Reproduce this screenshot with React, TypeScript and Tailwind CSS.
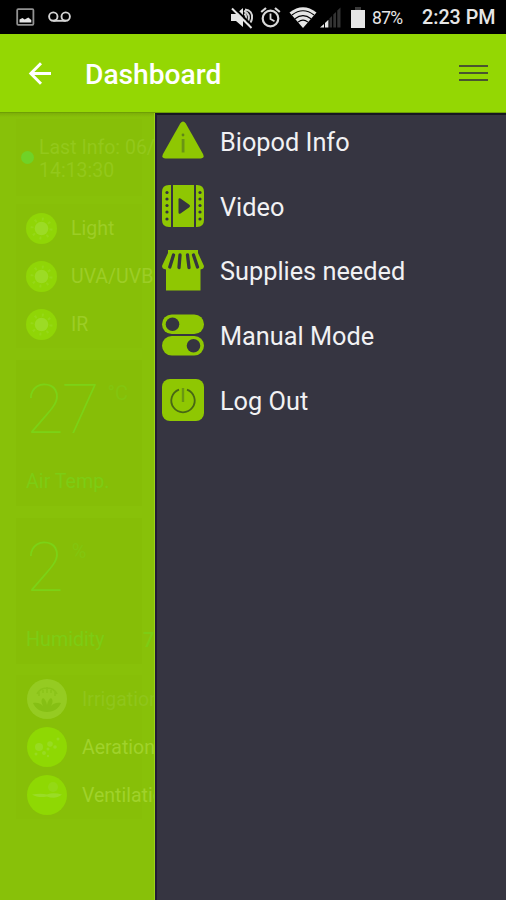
import type { ReactNode } from "react";

const font = "[font-family:Roboto,'Liberation_Sans',sans-serif]";

const StatusBar = () => (
  <div className="flex h-[34px] shrink-0 items-center bg-black text-[#e6e6e6]">
    {/* Notifications */}
    <svg className="ml-[16px] h-[18px] w-[19px]" viewBox="0 0 19 18" fill="none">
      <rect x="1.2" y="1.2" width="16.2" height="15.6" rx="1" stroke="#929292" strokeWidth="1.8" />
      <path d="M3.500 14.500v-3l3-1.500 2.200 1.500 3.600-2 3 2.500v2.500z" fill="#e6e6e6" />
    </svg>
    <svg className="ml-[13px] h-[12px] w-[23px]" viewBox="0 0 23 12" fill="none" stroke="#d5d5d5" strokeWidth="1.9">
      <circle cx="5.3" cy="5.6" r="4.2" />
      <circle cx="17.7" cy="5.6" r="4.2" />
      <path d="M5.3 9.8h12.4" />
    </svg>

    {/* System icons */}
    <svg className="ml-[159px] h-[23px] w-[24px]" viewBox="0 0 24 23" fill="none">
      <path d="M1 8h5l7-6v19l-7-6H1z" fill="#e6e6e6" />
      <path d="M14.5 7.5q3 3.5 0 8M15 3.5q8 1 7 9-.5 4-4 6.500M14 5q7 3 4 11" stroke="#d5d5d5" strokeWidth="2" />
      <path d="M3.600 1.200 23 20.500" stroke="#000" strokeWidth="2.2" />
      <path d="M2 2.500 21.500 22" stroke="#e6e6e6" strokeWidth="2" />
    </svg>
    <svg className="ml-[6px] h-[23px] w-[21px]" viewBox="0 0 21 23" fill="none" stroke="#d9d9d9">
      <circle cx="10.500" cy="12.500" r="7.800" strokeWidth="2.200" />
      <path d="M10.500 7.500V13l4 2.300" strokeWidth="1.800" />
      <path d="M1.200 6 6 2M15 2l4.800 4" strokeWidth="2.200" />
    </svg>
    <svg className="ml-[8px] h-[23px] w-[28px]" viewBox="0 0 28 23" fill="none">
      <path d="M.5 6.500Q14-4 27.500 6.500L14 22z" fill="#e6e6e6" />
      <path d="M3 9Q14 .5 25 9M6 12.700Q14 6.500 22 12.700M9 16.200Q14 12 19 16.200" stroke="#000" strokeWidth="1.100" />
    </svg>
    <svg className="ml-[3px] h-[21px] w-[21px]" viewBox="0 0 21 21">
      <path d="M0 20.500 4 17v3.500z M5 16l3.400-3.300v7.800H5z" fill="#e6e6e6" />
      <path d="M9.400 11.500 12 9v11.500H9.400z M13.300 7.500 16 5v15.500h-2.700z M17.300 3.500 20.500.5v20h-3.200z" fill="#333" />
    </svg>
    <svg className="ml-[10px] h-[21px] w-[14px]" viewBox="0 0 14 21">
      <path d="M4 0h6v3H4z" fill="#3a3a3a" />
      <path d="M0 3h14v18H0z" fill="#e6e6e6" />
    </svg>
    <span className="mt-[2px] ml-[7px] w-[50px] text-[17.5px] whitespace-nowrap tracking-[-0.7px]">87%</span>
    <span className="mt-[2px] text-[19.7px] font-medium whitespace-nowrap">2:23 PM</span>
  </div>
);

const Header = () => (
  <header className="flex h-[79px] shrink-0 items-center border-b border-[#6f9f05] bg-[#94d703]">
    <svg className="ml-[28px] h-[24px] w-[24px]" viewBox="0 0 24 24" fill="none" stroke="white" strokeWidth="2.900">
      <path d="M23 12.500H3M13 2.300 2.800 12.500 13 22.700" />
    </svg>
    <h1 className="mt-[4px] ml-[33px] text-[28.2px] leading-8 font-medium whitespace-nowrap text-white">Dashboard</h1>
    <div className="mr-[18px] ml-auto flex w-[29px] flex-col gap-[4.5px]">
      <span className="h-[2.5px] bg-[#4a5530]" />
      <span className="h-[2.5px] bg-[#4a5530]" />
      <span className="h-[2.5px] bg-[#4a5530]" />
    </div>
  </header>
);

const SunIcon = () => (
  <svg className="size-[31px] shrink-0" viewBox="0 0 31 31">
    <circle cx="15.500" cy="15.500" r="15.500" fill="#90d506" />
    <circle cx="15.500" cy="15.500" r="9.500" fill="none" stroke="#96d817" strokeWidth="3" strokeDasharray="2 5.460" />
    <circle cx="15.500" cy="15.500" r="6.800" fill="#9cdb25" />
  </svg>
);

const LightRow = ({ label }: { label: string }) => (
  <div className="flex h-[48px] items-center gap-[14px] pl-[10px]">
    <SunIcon />
    <span className="mt-[2px] text-[19.5px] whitespace-nowrap text-[#9ccd26]">{label}</span>
  </div>
);

type GaugeProps = {
  value: string;
  unit: string;
  label: string;
  extra?: string;
};

const Gauge = ({ value, unit, label, extra }: GaugeProps) => (
  <section className="mr-[12px] flex flex-col bg-[#86be07] pl-[10px]">
    <div className="flex h-[96px] items-center gap-[10px]">
      <span className="mt-[4px] text-[69px] leading-[80px] font-thin tracking-[-2px] text-[#7cd216]">{value}</span>
      <span className="mb-[30px] text-[20px] text-[#83c50f]">{unit}</span>
    </div>
    <div className="flex h-[50px] items-center pt-[2px] whitespace-nowrap text-[#7dcc14]">
      <span className="w-[117px] shrink-0 text-[19.7px]">{label}</span>
      <span className="text-[20px] font-medium">{extra}</span>
    </div>
  </section>
);

type DeviceRowProps = {
  label: string;
  dim?: boolean;
  children: ReactNode;
};

const DeviceRow = ({ label, dim, children }: DeviceRowProps) => (
  <div className="flex h-[48px] items-center gap-[15px] pl-[11px]">
    <svg className="size-[40px] shrink-0" viewBox="0 0 40 40">
      <circle cx="20" cy="20" r="20" fill={dim ? "#95cb22" : "#8fd803"} />
      {children}
    </svg>
    <span className={`mt-[2px] text-[19.5px] whitespace-nowrap ${dim ? "text-[#8fc51b]" : "text-[#a0d22b]"}`}>{label}</span>
  </div>
);

// Dashboard pushed behind the opened drawer
const Dashboard = () => (
  <main className="flex w-[155px] shrink-0 flex-col overflow-hidden border-r border-[#9bd31a] bg-[#88c109] pl-[16px]">
    <div className="-ml-[16px] h-[4px] w-[155px] shrink-0 bg-linear-to-b from-[#7dae08] to-[#88c109]" />
    <div className="mt-[2px] mr-[12px] flex h-[77px] items-center gap-[5px] bg-[#87bf08] pl-[5px]">
      <span className="mb-[1px] size-[13px] shrink-0 rounded-full bg-[#70d227]" />
      <p className="pt-[2px] text-[19.5px] leading-[23px] whitespace-nowrap text-[#93c81b]">
        Last Info: 06/
        <br />
        14:13:30
      </p>
    </div>
    <section className="mt-[8px] mr-[12px] flex flex-col bg-[#87bf08]">
      <LightRow label="Light" />
      <LightRow label="UVA/UVB" />
      <LightRow label="IR" />
    </section>
    <div className="mt-[12px] flex flex-col gap-[12px]">
      <Gauge value="27" unit="°C" label="Air Temp." />
      <Gauge value="2" unit="%" label="Humidity" extra="7" />
    </div>
    <section className="mt-[11px] mr-[12px] flex flex-col bg-[#87bf08]">
      <DeviceRow label="Irrigation" dim>
        <path
          d="M20 33c-7 0-12-4-14-9 5-1 8 1 10 3-2-4-2-6 0-8 2 1 3 3 4 7 1-4 2-6 4-7 2 2 2 4 0 8 2-2 5-4 10-3-2 5-7 9-14 9z"
          fill="#86bf14"
        />
        <path d="M10 15c2-4 6-6 10-6s8 2 10 6M12 12v5M16 9v5M20 8v6M24 9v5M28 12v5" fill="none" stroke="#8bc319" strokeWidth="1.500" />
      </DeviceRow>
      <DeviceRow label="Aeration">
        <g fill="#98db20">
          <circle cx="12" cy="20" r="4" />
          <circle cx="23" cy="17" r="2.800" />
          <circle cx="17" cy="26" r="2" />
          <circle cx="28" cy="20" r="1.800" />
          <circle cx="21" cy="22" r="1.500" />
          <circle cx="31" cy="12" r="1.500" />
          <circle cx="9" cy="27" r="1.500" />
          <circle cx="21" cy="29" r="1.200" />
        </g>
      </DeviceRow>
      <DeviceRow label="Ventilation">
        <circle cx="26" cy="12" r="5" fill="#94d915" />
        <path d="M5 19.500c6-1 11-1 15 0 5-2 10-1 15 0-5 4-10 4-15 2-5 1-10 1-15-2z" fill="#9adc26" />
      </DeviceRow>
    </section>
  </main>
);

const InfoIcon = () => (
  <svg className="size-[42px]" viewBox="0 0 42 42" fill="#8fc702">
    <path d="M18.200 3.500q2.800-4 5.600 0L41 34q2 4.500-2.500 4.500h-35Q-1 38.500 1 34z" />
    <circle cx="21" cy="15" r="1.400" fill="#5f8518" />
    <path d="M19.700 19h2.800v13.500h-2.800z" fill="#6a9414" />
  </svg>
);

const VideoIcon = () => (
  <svg className="size-[42px]" viewBox="0 0 42 42" fill="#8fc702">
    <path d="M7 0h2v42H7q-7 0-7-7V7q0-7 7-7zM11 0h21v42H11zM34 0h1q7 0 7 7v28q0 7-7 7h-1z" />
    <path d="M16.500 14.500q0-2 2-1l8.500 6q2 1.500 0 3l-8.500 6q-2 1-2-1z" fill="#353440" />
    <g fill="#353440">
      {[7.5, 14, 20.5, 27, 34].map((y) => (
        <g key={y}>
          <circle cx="5" cy={y} r="1.600" />
          <circle cx="38" cy={y} r="1.600" />
        </g>
      ))}
    </g>
  </svg>
);

const StoreIcon = () => (
  <svg className="size-[42px]" viewBox="0 0 42 42" fill="#8fc702">
    <path d="M6 1h30v3l6 13q0 3-3.500 3.500V41.500H4v-21Q0 20 0 17L6 4z" />
    <path
      d="M11.500 6 7.800 18M18 6l-1 12.500M25.500 6l1.500 12.500M31.500 6l4 12"
      fill="none"
      stroke="#353440"
      strokeWidth="3.300"
      strokeLinecap="round"
    />
  </svg>
);

const SwitchIcon = () => (
  <svg className="size-[42px]" viewBox="0 0 42 42">
    <rect y=".5" width="42" height="19.500" rx="9.750" fill="#8fc702" />
    <rect y="22" width="42" height="19.500" rx="9.750" fill="#8fc702" />
    <circle cx="10.500" cy="10.200" r="6.800" fill="#353440" />
    <circle cx="31.500" cy="31.800" r="6.800" fill="#353440" />
  </svg>
);

const PowerIcon = () => (
  <svg className="size-[42px]" viewBox="0 0 42 42" fill="none">
    <rect width="42" height="42" rx="8" fill="#8fc702" />
    <path d="M17 10.600a11.700 11.700 0 1 0 8 0" stroke="#486715" strokeWidth="1.800" />
    <path d="M21 9v14" stroke="#6a9712" strokeWidth="2.400" />
  </svg>
);

const menu = [
  { label: "Biopod Info", icon: <InfoIcon /> },
  { label: "Video", icon: <VideoIcon /> },
  { label: "Supplies needed", icon: <StoreIcon /> },
  { label: "Manual Mode", icon: <SwitchIcon /> },
  { label: "Log Out", icon: <PowerIcon /> },
];

const Drawer = () => (
  <nav className="flex grow flex-col border-t-2 border-l-2 border-t-[#171720] border-l-[#211b35] bg-[#363541] pl-[5px]">
    {menu.map(({ label, icon }) => (
      <div key={label} className="flex h-[64.7px] shrink-0 items-start gap-[16px] pt-[5px]">
        {icon}
        <span className="text-[25.3px] leading-[45px] whitespace-nowrap text-[#f1f1f3]">{label}</span>
      </div>
    ))}
  </nav>
);

const App = () => (
  <div className={`flex h-[900px] w-[506px] flex-col overflow-hidden ${font}`}>
    <StatusBar />
    <Header />
    <div className="flex min-h-0 grow">
      <Dashboard />
      <Drawer />
    </div>
  </div>
);

export default App;
